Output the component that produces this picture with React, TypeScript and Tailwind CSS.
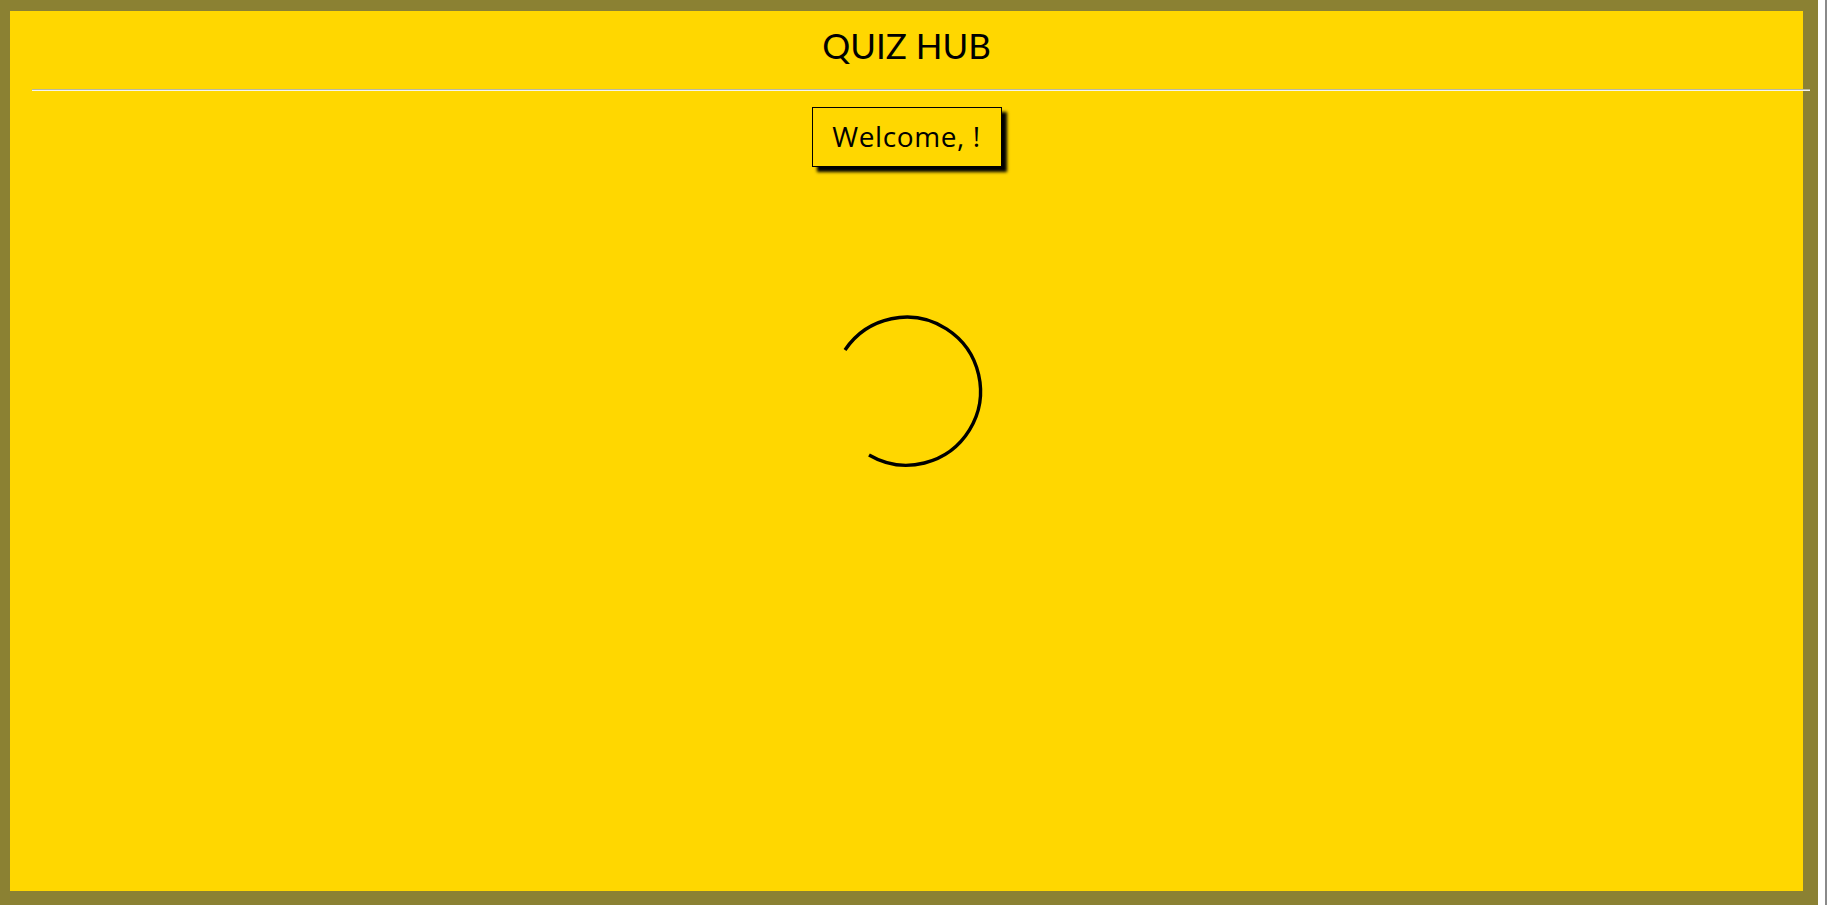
import React from "react";

export default function App() {
  return (
    <div className="w-[1827px] h-[905px] flex bg-white overflow-hidden">
      <div className="w-[1818px] h-[905px] shrink-0 bg-[#8b8133] pl-[10px] pr-[15px] pt-[11px] pb-[14px]">
        <div className="h-full bg-[#ffd700] flex flex-col items-center text-black [font-family:Lato,'Open_Sans',sans-serif]">
          <div className="h-[78px] w-full flex items-start justify-center pt-[14px]">
            <h1 className="text-[35px] leading-[40px] font-normal tracking-[0px]">QUIZ HUB</h1>
          </div>
          <div className="self-stretch ml-[22px] mr-[-7px] h-[2px] border-t border-t-[#b8b8a0] border-b border-b-[#f4f4f0]" />
          <div className="mt-[16px] w-[190px] h-[60px] pb-[3px] border border-black flex items-center justify-center shadow-[5px_5px_3px_#000]">
            <span className="text-[28px] leading-[32px] tracking-[0.6px] [font-family:'Open_Sans',sans-serif]">Welcome, !</span>
          </div>
          <div className="mt-[148px] w-[152px] h-[152px]">
            <svg width="152" height="152" viewBox="0 0 152 152" overflow="visible">
              <path
                d="M 38 140 A 74 74 0 1 0 14 35"
                fill="none"
                stroke="#000"
                strokeWidth="3.4"
              />
            </svg>
          </div>
        </div>
      </div>
      <div className="flex-1 bg-white" />
      <div className="w-[2px] bg-[#8a8a8a]" />
    </div>
  );
}
